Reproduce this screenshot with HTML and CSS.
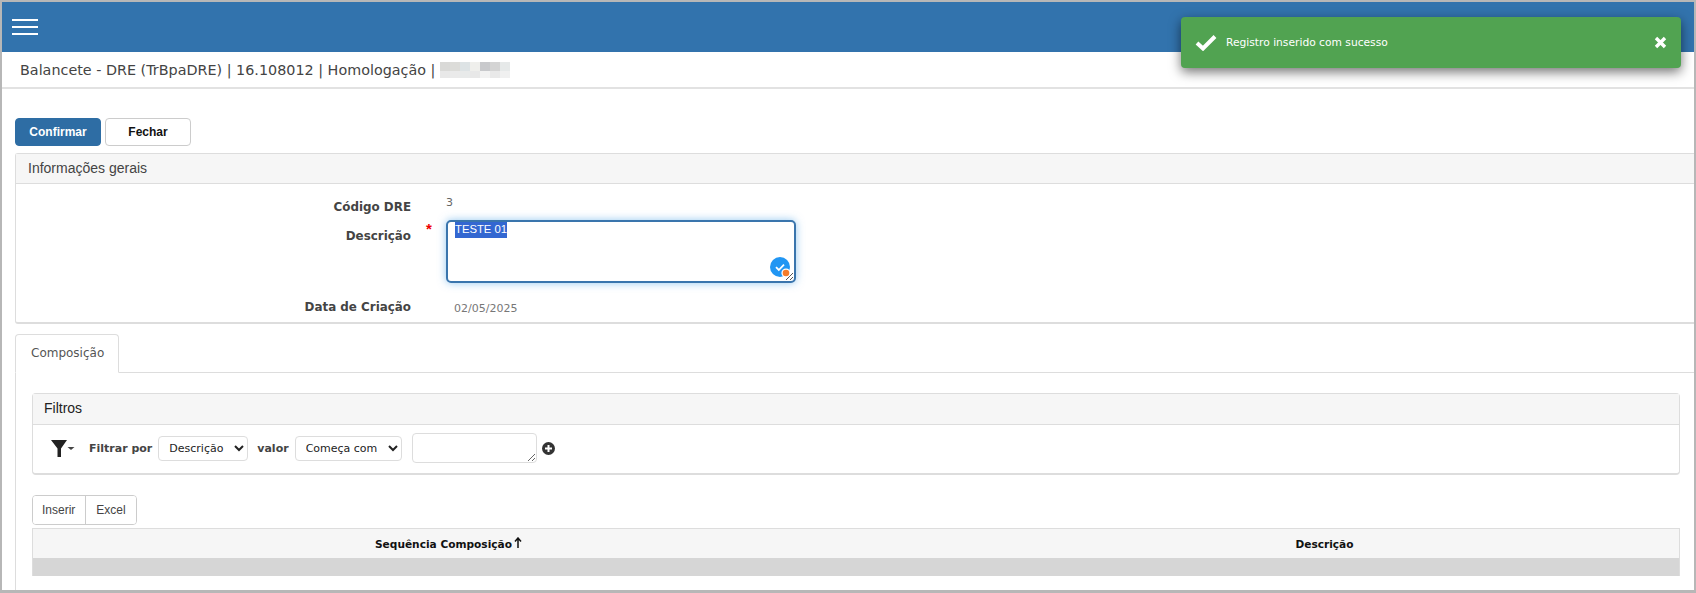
FILE: index.html
```html
<!DOCTYPE html>
<html lang="pt-BR">
<head>
<meta charset="utf-8">
<title>Balancete - DRE</title>
<link rel="stylesheet" href="styles.css">
</head>
<body>
<div class="frame">
  <header class="topbar">
    <button class="burger" aria-label="Menu"><span></span><span></span><span></span></button>
  </header>
  <div class="titlebar">
    <span>Balancete - DRE (TrBpaDRE) | 16.108012 | Homologação |</span>
    <svg class="redact" width="70" height="16" viewBox="0 0 70 16" aria-hidden="true">
      <rect x="0" y="0" width="10" height="9" fill="#d9d9d7"/>
      <rect x="10" y="0" width="10" height="9" fill="#dcdcd9"/>
      <rect x="20" y="0" width="10" height="9" fill="#dde3e5"/>
      <rect x="30" y="0" width="10" height="9" fill="#efefec"/>
      <rect x="40" y="0" width="10" height="9" fill="#c8c9cc"/>
      <rect x="50" y="0" width="10" height="9" fill="#d4d4d4"/>
      <rect x="60" y="0" width="10" height="9" fill="#e6e9e9"/>
      <rect x="0" y="9" width="10" height="7" fill="#e8e8e8"/>
      <rect x="10" y="9" width="10" height="7" fill="#eaeaea"/>
      <rect x="20" y="9" width="10" height="7" fill="#e8eaea"/>
      <rect x="30" y="9" width="10" height="7" fill="#e8e8e8"/>
      <rect x="40" y="9" width="10" height="7" fill="#f2f2f2"/>
      <rect x="50" y="9" width="10" height="7" fill="#e9e9e9"/>
      <rect x="60" y="9" width="10" height="7" fill="#f0f0f0"/>
    </svg>
  </div>
  <main class="content">
    <div class="actions">
      <button class="btn btn-primary">Confirmar</button>
      <button class="btn btn-default">Fechar</button>
    </div>
    <section class="panel">
      <div class="panel-head">Informações gerais</div>
      <div class="form">
        <div class="row row-code">
          <label class="lbl">Código DRE</label>
          <span class="val-code">3</span>
        </div>
        <div class="row row-desc">
          <label class="lbl">Descrição</label>
          <span class="req">*</span>
          <div class="desc-box">
            <div class="desc-area"><span class="sel">TESTE 01</span></div>
            <svg class="grip" width="10" height="10" viewBox="0 0 10 10" aria-hidden="true"><path d="M9 2 2 9M9 6 6 9" stroke="#555" stroke-width="1" fill="none"/></svg>
            <span class="badge">
              <svg width="20" height="20" viewBox="0 0 20 20" aria-hidden="true"><circle cx="10" cy="10" r="10" fill="#2196f3"/><path d="M6 10.2 8.800 13 14 7.600" stroke="#fff" stroke-width="1.800" fill="none"/><circle cx="16" cy="16" r="4.600" fill="#fff"/><circle cx="16" cy="16" r="3.300" fill="#f57c2b"/></svg>
            </span>
          </div>
        </div>
        <div class="row row-date">
          <label class="lbl">Data de Criação</label>
          <span class="val-date">02/05/2025</span>
        </div>
      </div>
    </section>
    <div class="tabs">
      <div class="tab">Composição</div>
    </div>
    <section class="tab-body">
      <div class="filters">
        <div class="filters-head">Filtros</div>
        <div class="filters-row">
          <span class="funnel">
            <svg width="24" height="18" viewBox="0 0 24 18" aria-hidden="true"><path d="M0 1h16L10 9.500V18H6.500V9.500z" fill="#222"/><path d="M16.500 8h7l-3.500 3z" fill="#444"/></svg>
          </span>
          <span class="f-label f-por">Filtrar por</span>
          <select class="sel-a"><option>Descrição</option></select>
          <span class="f-label f-valor">valor</span>
          <select class="sel-b"><option>Começa com</option></select>
          <textarea class="f-text"></textarea>
          <svg class="plus" width="13" height="13" viewBox="0 0 13 13" aria-hidden="true"><circle cx="6.500" cy="6.500" r="6.500" fill="#333"/><path d="M6.500 3v7M3 6.500h7" stroke="#fff" stroke-width="2"/></svg>
        </div>
      </div>
      <div class="btn-group">
        <button class="gbtn">Inserir</button>
        <button class="gbtn">Excel</button>
      </div>
      <table class="grid">
        <thead>
          <tr>
            <th class="th-seq">Sequência Composição<svg class="arrow" width="8" height="11" viewBox="0 0 8 11" aria-hidden="true"><path d="M4 11V2M1 4.500 4 1l3 3.500" stroke="#111" stroke-width="1.500" fill="none"/></svg></th>
            <th class="th-desc">Descrição</th>
          </tr>
        </thead>
        <tbody><tr><td></td><td></td></tr></tbody>
      </table>
    </section>
  </main>
  <aside class="toast">
    <svg class="toast-check" width="22" height="17" viewBox="0 0 22 17" aria-hidden="true"><path d="M2 9l6 5.500L20 2.500" stroke="#fff" stroke-width="4" fill="none"/></svg>
    <span class="toast-msg">Registro inserido com sucesso</span>
    <svg class="toast-x" width="13" height="13" viewBox="0 0 13 13" aria-hidden="true"><path d="M2 2l9 9M11 2l-9 9" stroke="#fff" stroke-width="3.400"/></svg>
  </aside>
</div>
</body>
</html>
```
FILE: styles.css
```css
* { box-sizing: border-box; }
html, body { margin: 0; padding: 0; background: #fff; }
body { font-family: "Liberation Sans", Arial, sans-serif; font-size: 12px; color: #333; overflow: hidden; }
.frame { position: relative; width: 1696px; height: 593px; border: solid #b7b7b7; border-width: 2px 2px 3px 2px; overflow: hidden; background: #fff; }

.topbar { height: 50px; background: #3273ad; padding: 17px 0 0 10px; }
.burger { display: flex; flex-direction: column; gap: 5px; width: 26px; padding: 0; border: 0; background: none; }
.burger span { display: block; height: 2px; width: 26px; background: #fff; }

.titlebar { height: 37px; border-bottom: 2px solid #e2e2e2; padding: 10px 0 0 18px; display: flex; align-items: flex-start; gap: 5px; font-family: "DejaVu Sans", sans-serif; font-size: 14.350px; line-height: 17px; color: #444; }
.redact { margin-top: 0; }

.content { padding: 0 0 0 13px; }
.actions { display: flex; gap: 4px; margin-top: 29px; height: 28px; }
.btn { height: 28px; border-radius: 4px; font: bold 12px "Liberation Sans", Arial, sans-serif; padding: 0; }
.btn-primary { width: 86px; background: #2e6da4; border: 1px solid #2e6da4; color: #fff; }
.btn-default { width: 86px; background: #fff; border: 1px solid #ccc; color: #111; }

.panel { margin-top: 7px; border: 1px solid #ddd; border-right: 0; height: 171px; border-radius: 3px 0 0 3px; border-bottom-width: 2px; }
.panel-head { height: 30px; background: #f6f6f6; border-bottom: 1px solid #ddd; padding: 0 12px; line-height: 28px; font-size: 14px; color: #444; }
.form { position: relative; height: 138px; }
.row { display: flex; }
.lbl { width: 395px; text-align: right; font: bold 11.900px "DejaVu Sans", sans-serif; color: #444; flex: none; }
.row-code { height: 36px; padding-top: 16px; }
.val-code { margin: -4px 0 0 35px; font: 11px "DejaVu Sans", sans-serif; color: #666; }
.row-desc { height: 63px; }
.row-desc .lbl { padding-top: 9px; }
.req { width: 35px; padding-left: 15px; color: #e00; font: bold 15px "Liberation Sans", sans-serif; }
.desc-box { position: relative; width: 350px; height: 63px; flex: none; }
.desc-area { width: 100%; height: 100%; border: 2px solid #3a75ad; border-radius: 5px; padding: 0 7px; box-shadow: 0 0 8px rgba(102,175,233,.7); font-size: 11.300px; line-height: 15px; background: #fff; color: #fff; }
.sel { background: #3367d1; color: #fff; display: inline-block; padding: 0 0 1px 0; }
.grip { position: absolute; right: 2px; bottom: 2px; }
.badge { position: absolute; right: 6px; bottom: 6px; width: 20px; height: 20px; }
.badge svg { display: block; }
.row-date { padding-top: 17px; }
.row-date .lbl { line-height: 15px; }
.val-date { margin: 1px 0 0 43px; font: 11px "DejaVu Sans", sans-serif; color: #777; line-height: 16px; }

.tabs { margin-top: 10px; height: 39px; border-bottom: 1px solid #ddd; margin-left: 0; }
.tab { width: 104px; height: 39px; background: #fff; border: 1px solid #ddd; border-bottom-color: #fff; border-radius: 4px 4px 0 0; padding: 0 15px; font: 12px/36px "DejaVu Sans", sans-serif; color: #555; }

.tab-body { border-left: 1px solid #ddd; padding: 20px 0 0 16px; height: 220px; }
.filters { width: 1648px; height: 82px; border: 1px solid #ddd; border-radius: 4px; border-bottom-width: 2px; }
.filters-head { height: 31px; background: #f6f6f6; border-bottom: 1px solid #ddd; padding: 0 11px; font-size: 14px; line-height: 29px; color: #222; }
.filters-row { display: flex; align-items: center; height: 46px; padding-left: 18px; }
.funnel { display: flex; width: 24px; margin-right: 14px; }
.f-label { font: bold 11px "DejaVu Sans", sans-serif; color: #444; }
.f-por { margin-right: 6px; }
select { height: 25px; background: #fff; border: 1px solid #ddd; border-radius: 4px; font: 12px "DejaVu Sans", sans-serif; color: #222; padding: 0 6px; }
.sel-a { width: 90px; font-size: 11px; }
.f-valor { margin: 0 6px 0 9px; }
.sel-b { width: 107px; font-size: 11px; }
.f-text { width: 125px; height: 30px; margin-left: 10px; border: 1px solid #ddd; border-radius: 4px; }
.plus { margin-left: 5px; }

.btn-group { display: flex; margin-top: 20px; width: 105px; height: 30px; border: 1px solid #ccc; border-radius: 4px; overflow: hidden; }
.gbtn { border: 0; background: #fff; padding: 0 10px 0 9px; font: 12px "Liberation Sans", Arial, sans-serif; color: #444; }
.gbtn + .gbtn { border-left: 1px solid #ccc; padding-left: 10px; }

.grid { width: 1648px; margin-top: 3px; border-collapse: collapse; table-layout: fixed; border: 1px solid #ddd; border-bottom: 0; }
.grid th { height: 29px; background: #f6f6f6; font: bold 10.600px "DejaVu Sans", sans-serif; color: #111; text-align: center; padding: 1px 0 0; }
.grid .th-seq { padding-left: 8px; }
.grid .th-desc { padding-left: 114px; }
.grid td { height: 18px; background: #d6d6d6; padding: 0; }
.arrow { margin-left: 2px; }

.toast { position: absolute; left: 1179px; top: 15px; width: 500px; height: 51px; background: #51a351; border-radius: 4px; box-shadow: 0 4px 12px rgba(0,0,0,.55); display: flex; align-items: center; color: #fff; padding: 0 14px; }
.toast-check { flex: none; }
.toast-msg { margin-left: 9px; font: 10.700px "DejaVu Sans", sans-serif; flex: 1; }
.toast-x { flex: none; }
```
